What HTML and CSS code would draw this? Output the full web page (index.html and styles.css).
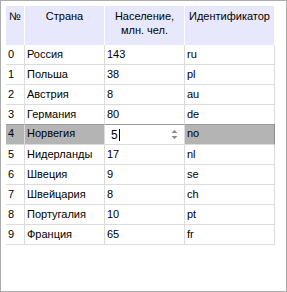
FILE: index.html
```html
<!DOCTYPE html>
<html lang="ru">
<head>
<meta charset="utf-8">
<link rel="stylesheet" href="styles.css">
</head>
<body>
<div class="frame">
  <div class="grid">
    <div class="hcell">№</div>
    <div class="hcell">Страна</div>
    <div class="hcell">Население,<br>млн. чел.</div>
    <div class="hcell">Идентификатор</div>

    <div class="cell">0</div><div class="cell">Россия</div><div class="cell">143</div><div class="cell">ru</div>
    <div class="cell">1</div><div class="cell">Польша</div><div class="cell">38</div><div class="cell">pl</div>
    <div class="cell">2</div><div class="cell">Австрия</div><div class="cell">8</div><div class="cell">au</div>
    <div class="cell">3</div><div class="cell">Германия</div><div class="cell">80</div><div class="cell">de</div>
    <div class="cell sel">4</div><div class="cell sel">Норвегия</div>
    <div class="cell edit">
      <div class="editor">
        <span class="val">5</span><span class="caret"></span>
        <span class="spin">
          <svg width="7" height="13" viewBox="0 0 7 13"><path d="M0.5 5 L3.5 2 L6.5 5 Z" fill="#8a8a8a"/><path d="M0.5 8 L3.5 11 L6.5 8 Z" fill="#8a8a8a"/></svg>
        </span>
      </div>
    </div>
    <div class="cell sel last">no</div>
    <div class="cell">5</div><div class="cell">Нидерланды</div><div class="cell">17</div><div class="cell">nl</div>
    <div class="cell">6</div><div class="cell">Швеция</div><div class="cell">9</div><div class="cell">se</div>
    <div class="cell">7</div><div class="cell">Швейцария</div><div class="cell">8</div><div class="cell">ch</div>
    <div class="cell">8</div><div class="cell">Португалия</div><div class="cell">10</div><div class="cell">pt</div>
    <div class="cell">9</div><div class="cell">Франция</div><div class="cell">65</div><div class="cell">fr</div>
  </div>
</div>
</body>
</html>
```
FILE: styles.css
```css
html, body {
  margin: 0;
  padding: 0;
  background: #ffffff;
}
.frame {
  width: 287px;
  height: 292px;
  box-sizing: border-box;
  border: 1px solid #acacac;
  padding: 5px;
  font-family: "Liberation Sans", Arial, sans-serif;
  font-size: 11px;
  color: #000000;
}
.grid {
  display: grid;
  grid-template-columns: 19px 80px 80px 90px;
  grid-template-rows: 39px;
  grid-auto-rows: 20px;
}
.hcell {
  background: #e8e8fc;
  border-right: 1px solid #ffffff;
  box-sizing: border-box;
  text-align: center;
  padding-top: 3px;
  line-height: 14px;
  white-space: nowrap;
}
.hcell:last-child { border-right: none; }
.cell {
  box-sizing: border-box;
  border-right: 1px solid #dcdcdc;
  border-bottom: 1px solid #dcdcdc;
  padding-left: 2px;
  line-height: 19px;
  white-space: nowrap;
  overflow: hidden;
}
.cell.sel {
  background: #b4b4b4;
  border-top: 1px solid #9a9a9a;
  line-height: 17px;
  margin-top: -1px;
  height: 21px;
}
.cell.last {
  border-right: 1px solid #8c8c8c;
}
.cell.edit {
  padding: 0;
  background: #ffffff;
  border-top: 1px solid #9a9a9a;
  margin-top: -1px;
  height: 21px;
}
.editor {
  display: flex;
  align-items: center;
  height: 100%;
  box-sizing: border-box;
  padding-left: 6px;
  padding-right: 6px;
}
.val {
  font-size: 12px;
  line-height: 12px;
}
.caret {
  width: 1px;
  height: 12px;
  background: #000000;
  margin-left: 1px;
}
.spin {
  margin-left: auto;
  display: flex;
  align-items: center;
}
```
